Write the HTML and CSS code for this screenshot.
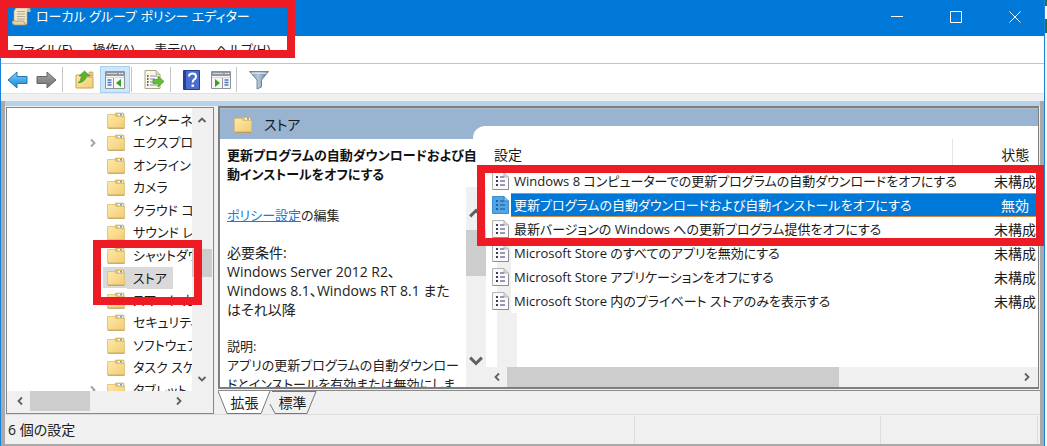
FILE: index.html
```html
<!DOCTYPE html>
<html lang="ja">
<head>
<meta charset="utf-8">
<title>ローカル グループ ポリシー エディター</title>
<link rel="stylesheet" href="styles.css">
</head>
<body>
<svg class="defs" aria-hidden="true">
  <defs>
    <linearGradient id="gold" x1="0" y1="0" x2="1" y2="1"><stop offset="0" stop-color="#ffe9a8"/><stop offset="1" stop-color="#f0cd74"/></linearGradient>
    <linearGradient id="sky" x1="0" y1="0" x2="0" y2="1"><stop offset="0" stop-color="#7fd0f8"/><stop offset="1" stop-color="#0f86d2"/></linearGradient>
    <linearGradient id="grey" x1="0" y1="0" x2="0" y2="1"><stop offset="0" stop-color="#a8a8a8"/><stop offset="1" stop-color="#6e6e6e"/></linearGradient>
    <linearGradient id="steel" x1="0" y1="0" x2="1" y2="0"><stop offset="0" stop-color="#6d8da6"/><stop offset=".45" stop-color="#b5cbdc"/><stop offset="1" stop-color="#577189"/></linearGradient>
    <symbol id="folder" viewBox="0 0 18 17">
      <path d="M8 3V2q0-1 1-1h7q1 0 1 1v3H8z" fill="#e5c36d" stroke="#c9a55a" stroke-width=".6"/>
      <path d="M11 2h5v1.500h-5z" fill="#fff"/><path d="M13 2h2v1.500h-2z" fill="#5aa2dc"/>
      <path d="M.5 2.500h7L9 4.500h8.500V16H.5z" fill="url(#gold)" stroke="#dcbb70" stroke-width=".8"/>
      <path d="M1 16.300h16.500" stroke="#b58f45" stroke-width=".8"/>
    </symbol>
    <symbol id="policy" viewBox="0 0 17 18">
      <path d="M.5.5H12L16.500 5v12.500H.5z" fill="#fafafa" stroke="#b4b4b4"/>
      <path d="M12 .5V5h4.500" fill="#d8d8d8" stroke="#b4b4b4"/>
      <path d="M1 17.500h15.500V6" fill="none" stroke="#8f8f8f"/>
      <path d="M4 4h2v2H4zM4 8h2v2H4zM4 12h2v2H4z" fill="#3c3c4a"/>
      <path d="M8 5h4M8 9h5M8 13h5" stroke="#7a76a6" stroke-width="1.400"/>
    </symbol>
    <symbol id="policy-on" viewBox="0 0 17 18">
      <path d="M.5.5H12L16.500 5v12.500H.5z" fill="#52a5e2" stroke="#3b8fd0"/>
      <path d="M12 .5V5h4.500" fill="#8dc5ee" stroke="#2f7fbe"/>
      <path d="M4 4h2v2H4zM4 8h2v2H4zM4 12h2v2H4z" fill="#1d639f"/>
      <path d="M8 5h4M8 9h5M8 13h5" stroke="#2470b4" stroke-width="1.400"/>
    </symbol>
    <symbol id="left" viewBox="0 0 12 12"><path d="M8 2.500L4.500 6 8 9.500" fill="none" stroke="currentColor" stroke-width="1.800"/></symbol>
    <symbol id="right" viewBox="0 0 12 12"><path d="M4 2.500L7.500 6 4 9.500" fill="none" stroke="currentColor" stroke-width="1.800"/></symbol>
    <symbol id="up" viewBox="0 0 12 12"><path d="M2.500 8L6 4.500 9.500 8" fill="none" stroke="currentColor" stroke-width="1.800"/></symbol>
    <symbol id="down" viewBox="0 0 12 12"><path d="M2.500 4L6 7.500 9.500 4" fill="none" stroke="currentColor" stroke-width="1.800"/></symbol>
  </defs>
</svg>
<div class="desktop">
  <div class="window">
    <header class="titlebar">
      <svg class="app-icon" viewBox="0 0 20 20" aria-hidden="true">
        <path d="M5 2h13q-2 1-2 4v12H3V5z" fill="#f1e6cc" stroke="#b8a57e" stroke-width=".7"/>
        <path d="M16 6q0-4 2-4t1.500 4z" fill="#cbb78c"/>
        <path d="M6 5.500h8M6 8h8M6 10.500h8M6 13h8" stroke="#a79b82" stroke-width=".8"/>
        <path d="M1 15h12q0 4 3 4H4q-3 0-3-4z" fill="#e3d3ab" stroke="#a8946a" stroke-width=".7"/>
      </svg>
      <h1 class="title">ローカル グループ ポリシー エディター</h1>
      <button class="caption" aria-label="最小化"><svg viewBox="0 0 12 12"><path d="M0 5.500h12"/></svg></button>
      <button class="caption" aria-label="最大化"><svg viewBox="0 0 12 12"><path d="M.5.5h11v11H.5z"/></svg></button>
      <button class="caption" aria-label="閉じる"><svg viewBox="0 0 12 12"><path d="M.5.5l11 11M11.500.5l-11 11"/></svg></button>
    </header>
    <nav class="menubar">
      <button>ファイル(F)</button><button>操作(A)</button><button>表示(V)</button><button>ヘルプ(H)</button>
    </nav>
    <div class="toolbar">
      <button aria-label="戻る"><svg width="21" height="18" viewBox="0 0 21 18"><path d="M1 9L10 1v4.500h10v7H10V17z" fill="url(#sky)" stroke="#2276b8"/></svg></button>
      <button aria-label="進む"><svg width="21" height="18" viewBox="0 0 21 18"><path d="M20 9L11 1v4.500H1v7h10V17z" fill="url(#grey)" stroke="#666"/></svg></button>
      <span class="sep"></span>
      <button aria-label="上へ"><svg width="20" height="19" viewBox="0 0 20 19"><path d="M1 5h7l2 2h8v11H1z" fill="url(#gold)" stroke="#caa453"/><path d="M14 2h4v4h-4z" fill="#e8c873" stroke="#caa453" stroke-width=".7"/><path d="M3 13q3-2 3.500-7H4l5.500-5L15 6h-3.500q-1 6-8.500 7z" fill="#59b52c" stroke="#3a8a1b" stroke-width=".6"/></svg></button>
      <button class="pressed" aria-label="コンソール ツリーの表示"><svg width="20" height="18" viewBox="0 0 20 18"><path d="M.5.500h19v17H.5z" fill="#f6f6f6" stroke="#8e9299"/><path d="M1 1h18v4H1z" fill="#8f98a5"/><path d="M2 2.500h10" stroke="#c8d0da"/><path d="M14 2.500h1.500M16.500 2.500H18" stroke="#fff"/><path d="M1 6.500h18" stroke="#d4d8dd"/><path d="M8.500 7v10" stroke="#999"/><path d="M2.500 9h4M2.500 11.500h4M2.500 14h4" stroke="#4e77b5" stroke-width="1.400"/><path d="M16 8v8l-5-4z" fill="#3d9e27"/></svg></button>
      <span class="sep"></span>
      <button aria-label="一覧のエクスポート"><svg width="21" height="19" viewBox="0 0 21 19"><path d="M1 .5h11l4 4v14H1z" fill="#fbf8e6" stroke="#a8a48e"/><path d="M12 .5v4h4" fill="#ddd8bb" stroke="#a8a48e" stroke-width=".7"/><path d="M3 6h1.500M3 9h1.500M3 12h1.500M3 15h1.500" stroke="#333" stroke-width="1.400"/><path d="M6 6h7M6 9h5M6 12h5M6 15h7" stroke="#8b86b4"/><path d="M9 9.500h5V6l6 5.500-6 5.500v-3.500H9z" fill="#62c038" stroke="#3f9420" stroke-width=".7"/></svg></button>
      <span class="sep"></span>
      <button aria-label="ヘルプ"><svg width="17" height="20" viewBox="0 0 17 20"><path d="M.5.5h16v19H.5z" fill="#4a6ed0" stroke="#233f91"/><path d="M1 1h2v18H1z" fill="#243f9c"/><path d="M6 6.500q0-3 3.500-3t3.500 3q0 2-2 3.200-1.300.8-1.300 2.800" fill="none" stroke="#fff" stroke-width="2"/><path d="M8.500 14.500h2.500v2.300H8.500z" fill="#fff"/></svg></button>
      <button class="action-pane" aria-label="操作ウィンドウの表示"><svg width="20" height="18" viewBox="0 0 20 18"><path d="M.5.500h19v17H.5z" fill="#f6f6f6" stroke="#8e9299"/><path d="M1 1h18v4H1z" fill="#8f98a5"/><path d="M2 2.500h10" stroke="#c8d0da"/><path d="M14 2.500h1.500M16.500 2.500H18" stroke="#fff"/><path d="M1 6.500h18" stroke="#d4d8dd"/><path d="M11.500 7v10" stroke="#999"/><path d="M13.500 9h4M13.500 11.500h4M13.500 14h4" stroke="#4e77b5" stroke-width="1.400"/><path d="M4 8v8l5-4z" fill="#3d9e27"/></svg></button>
      <span class="sep"></span>
      <button aria-label="フィルター"><svg width="20" height="20" viewBox="0 0 20 20"><path d="M.5 1.500h19L12.500 10v7L8 19V10z" fill="url(#steel)" stroke="#5c7488" stroke-width=".8"/><path d="M2 2.500h16l-1 1.500H3z" fill="#cfdeea"/></svg></button>
    </div>
    <div class="workspace">
      <section class="tree-pane">
        <ul class="tree">
          <li><svg class="folder"><use href="#folder"/></svg><span>インターネッ</span></li>
          <li><svg class="expander"><use href="#right"/></svg><svg class="folder"><use href="#folder"/></svg><span>エクスプロー</span></li>
          <li><svg class="folder"><use href="#folder"/></svg><span>オンライン</span></li>
          <li><svg class="folder"><use href="#folder"/></svg><span>カメラ</span></li>
          <li><svg class="folder"><use href="#folder"/></svg><span>クラウド コ</span></li>
          <li><svg class="folder"><use href="#folder"/></svg><span>サウンド レ</span></li>
          <li><svg class="folder"><use href="#folder"/></svg><span>シャットダウ</span></li>
          <li class="current"><svg class="folder"><use href="#folder"/></svg><span>ストア</span></li>
          <li><svg class="folder"><use href="#folder"/></svg><span>スマート カ</span></li>
          <li><svg class="folder"><use href="#folder"/></svg><span>セキュリティ</span></li>
          <li><svg class="folder"><use href="#folder"/></svg><span>ソフトウェア</span></li>
          <li><svg class="folder"><use href="#folder"/></svg><span>タスク スケ</span></li>
          <li><svg class="expander"><use href="#right"/></svg><svg class="folder"><use href="#folder"/></svg><span>タブレット</span></li>
        </ul>
        <div class="vbar">
          <button aria-label="上へスクロール"><svg><use href="#up"/></svg></button>
          <div class="track"><div class="thumb tree-thumb"></div></div>
          <button aria-label="下へスクロール"><svg><use href="#down"/></svg></button>
        </div>
        <div class="hbar">
          <button aria-label="左へスクロール"><svg><use href="#left"/></svg></button>
          <div class="track"><div class="thumb half"></div></div>
          <button aria-label="右へスクロール"><svg><use href="#right"/></svg></button>
        </div>
      </section>
      <section class="result">
        <div class="detail">
          <header class="detail-head"><svg class="folder"><use href="#folder"/></svg><h2>ストア</h2></header>
          <div class="detail-body">
            <article class="description">
              <h3>更新プログラムの自動ダウンロードおよび自<br>動インストールをオフにする</h3>
              <p><a href="#edit">ポリシー設定</a>の編集</p>
              <p class="requirements">必要条件:<br>Windows Server 2012 R2、<br>Windows 8.1、Windows RT 8.1 また<br>はそれ以降</p>
              <p>説明:<br>アプリの更新プログラムの自動ダウンロー<br>ドとインストールを有効または無効にしま</p>
            </article>
            <div class="vbar desc-bar">
              <button aria-label="上へスクロール"><svg><use href="#up"/></svg></button>
              <div class="track"><div class="thumb desc-thumb"></div></div>
              <button aria-label="下へスクロール"><svg><use href="#down"/></svg></button>
            </div>
            <div class="list">
              <div class="list-view">
                <table>
                  <thead><tr><th class="ico"></th><th class="name">設定</th><th class="state">状態</th></tr></thead>
                  <tbody>
                    <tr><td class="ico"><svg><use href="#policy"/></svg></td><td class="name">Windows 8 コンピューターでの更新プログラムの自動ダウンロードをオフにする</td><td class="state">未構成</td></tr>
                    <tr class="selected"><td class="ico"><svg><use href="#policy-on"/></svg></td><td class="name">更新プログラムの自動ダウンロードおよび自動インストールをオフにする</td><td class="state">無効</td></tr>
                    <tr><td class="ico"><svg><use href="#policy"/></svg></td><td class="name">最新バージョンの Windows への更新プログラム提供をオフにする</td><td class="state">未構成</td></tr>
                    <tr><td class="ico"><svg><use href="#policy"/></svg></td><td class="name">Microsoft Store のすべてのアプリを無効にする</td><td class="state">未構成</td></tr>
                    <tr><td class="ico"><svg><use href="#policy"/></svg></td><td class="name">Microsoft Store アプリケーションをオフにする</td><td class="state">未構成</td></tr>
                    <tr><td class="ico"><svg><use href="#policy"/></svg></td><td class="name">Microsoft Store 内のプライベート ストアのみを表示する</td><td class="state">未構成</td></tr>
                  </tbody>
                </table>
              </div>
              <div class="hbar">
                <button aria-label="左へスクロール"><svg><use href="#left"/></svg></button>
                <div class="track"><div class="thumb wide"></div></div>
                <button aria-label="右へスクロール"><svg><use href="#right"/></svg></button>
              </div>
            </div>
          </div>
        </div>
        <div class="tabs">
          <button class="tab"><svg viewBox="0 0 54 24" aria-hidden="true"><path d="M0 0l9 22.500h34L52 0" fill="#fff" stroke="#777"/></svg><span>拡張</span></button>
          <button class="tab second"><svg viewBox="0 0 54 24" aria-hidden="true"><path d="M6 .5h44L41 22.500H9L4 13" fill="#f0f0f0" stroke="#777"/></svg><span>標準</span></button>
        </div>
      </section>
    </div>
    <footer class="statusbar"><span class="count">6 個の設定</span><span class="cell"></span><span class="cell"></span></footer>
  </div>
  <div class="behind"></div>
  <div class="mark mark-title"></div>
  <div class="mark mark-tree"></div>
  <div class="mark mark-list"></div>
</div>
</body>
</html>
```
FILE: styles.css
```css
* { box-sizing: border-box; }
body {
  margin: 0;
  font: 14px/19px "Open Sans", "Noto Sans CJK JP", sans-serif;
  font-feature-settings: "palt";
  color: #1a1a1a;
}
button { font: inherit; font-feature-settings: inherit; color: inherit; border: 0; padding: 0; background: none; }
h1, h2, h3, p, ul { margin: 0; padding: 0; font-size: inherit; font-weight: normal; }
svg { display: block; flex: none; }
.defs { position: absolute; width: 0; height: 0; }
.desktop { position: relative; display: flex; height: 100vh; overflow: hidden; }
.window {
  flex: 1; min-width: 0; display: flex; flex-direction: column;
  border: solid #1a82d8; border-width: 0 1px; background: #f0f0f0;
}
.behind {
  width: 2px;
  background: linear-gradient(#217346 0 6px, #fff 6px 19px, #217346 19px 33px, #f2f2f2 33px 100px, #fff 100px);
}

.titlebar { display: flex; height: 36px; flex: none; background: #0078d7; color: #fff; }
.app-icon { width: 20px; height: 20px; margin: 6px 5px 0 10px; }
.title { flex: 1; font-size: 13px; line-height: 33px; white-space: nowrap; }
.caption { width: 59px; height: 34px; display: flex; justify-content: center; align-items: center; }
.caption svg { width: 12px; height: 12px; fill: none; stroke: #fff; }
.menubar { display: flex; gap: 20px; height: 28px; flex: none; padding: 0 12px; background: #fff; border-bottom: 1px solid #c2c2c8; font-size: 13px; white-space: nowrap; }
.toolbar { display: flex; align-items: center; gap: 8px; height: 30px; flex: none; padding: 2px 6px 0; background: #fff; border-bottom: 1px solid #e3e3e3; }
.pressed { display: flex; align-items: center; height: 27px; padding: 4px; margin: 0 -4px 0 -3px; background: #cde6f9; border: 1px solid #a5d1f3; }
.sep { width: 1px; height: 25px; margin-left: -3px; background: #c4c4c4; }
.sep + button { margin-left: 4px; }
.action-pane { margin-left: 3px; }

.workspace {
  flex: 1; min-height: 0; display: grid; grid-template: minmax(0, 1fr) / 209px minmax(0, 1fr); column-gap: 4px;
  margin-top: 7px; padding-top: 5px; border: solid #a9a9a9; border-width: 0 4px;
  background: linear-gradient(#b8d1ea 0 5px, #f0f0f0 5px);
}
.tree-pane {
  display: grid; grid-template: minmax(0, 1fr) 22px / minmax(0, 1fr) 20px;
  margin: 1px 0 0 1px; padding-right: 1px; border: 1px solid #828790; background: #f0f0f0;
}
.tree { list-style: none; overflow: hidden; background: #fff; padding-top: 1px; display: grid; grid-auto-rows: 22px 23px; align-content: start; font-size: 13px; white-space: nowrap; }
.tree li { display: flex; align-items: center; padding-left: 98px; }
.folder { width: 18px; height: 17px; margin: 0 2px; }
.tree .expander { width: 12px; height: 12px; margin: 0 6px 0 -18px; color: #a0a0a0; }
.tree span { padding: 0 6px; }
.current .folder { box-shadow: -2px 0 0 2px #d9d9d9, 2px 0 0 2px #d9d9d9; background: #d9d9d9; }
.current span { background: #d9d9d9; line-height: 22px; }
.vbar, .hbar { display: flex; background: #f0f0f0; color: #606060; }
.vbar { flex-direction: column; }
.vbar button, .hbar button { width: 20px; height: 20px; display: grid; place-items: center; }
.vbar svg, .hbar svg { width: 12px; height: 12px; }
.track { flex: 1; min-width: 0; min-height: 0; }
.thumb { background: #cdcdcd; }
.tree-pane .vbar { padding: 2px 0; }
.tree-pane .hbar { padding: 0 3px; }
.tree-thumb { height: 28px; margin-top: 119px; }
.hbar .thumb { height: 20px; }
.hbar .half { width: 43%; }
.hbar .wide { width: 65%; }

.result { display: flex; flex-direction: column; min-height: 0; }
.detail { flex: 1; min-height: 0; display: flex; flex-direction: column; border: 2px solid #7e7e7e; border-right-width: 1px; margin-right: 1px; background: #fff; }
.detail-head { position: relative; display: flex; align-items: center; gap: 10px; height: 31px; flex: none; padding: 0 12px; background: #99b4d1; border-top: 1px solid #b0bfd0; }
.detail-head::after { content: ""; position: absolute; left: 253px; right: 0; bottom: 0; height: 13px; border-top-left-radius: 12px; background: #fff; }
.detail-body { flex: 1; min-height: 0; display: grid; grid-template: minmax(0, 1fr) / 246px 20px minmax(0, 1fr); }
.description { padding: 7px 0 0 7px; font-size: 13px; white-space: nowrap; min-height: 0; overflow-y: clip; color: #222; }
.description h3 { font-weight: bold; margin-bottom: 22px; color: #111; }
.description p { margin-bottom: 18px; }
.description .requirements { font-size: 14px; }
a { color: #1a7ad4; }
.desc-bar { margin-top: 48px; padding: 16px 0; }
.desc-bar svg { width: 20px; height: 20px; }
.desc-thumb { height: 46px; margin-top: 7px; }
.list { display: flex; flex-direction: column; min-height: 0; min-width: 0; }
.list .hbar { padding: 0 1px; }
.list-view { flex: 1; min-height: 0; overflow: hidden; background: linear-gradient(#f0f0f0, #f0f0f0) 11px 106px / 20px 100% no-repeat #fff; }
table { width: 100%; border-collapse: collapse; table-layout: fixed; white-space: nowrap; background: linear-gradient(#fff, #fff) 25px 0 / 100% 100% no-repeat; }
th, td { padding: 0; font-weight: normal; text-align: left; height: 24px; }
th { height: 30px; }
th.name { text-indent: -20px; }
td.name { font-size: 13px; }
th.ico, td.ico { width: 25px; padding-left: 6px; }
.ico svg { width: 17px; height: 18px; }
th.name, td.name { padding-left: 3px; }
th.state, td.state { width: 86px; padding-left: 40px; text-align: center; }
th.state { border-left: 1px solid #e5e5e5; }
.selected .name, .selected .state { background: #0078d7; color: #fff; box-shadow: inset 0 1px #d08a4a, inset 0 -1px #d08a4a; }

.tabs { display: flex; height: 24px; flex: none; border-top: 1px solid #8a8a8a; margin-top: 1px; }
.tab { position: relative; display: grid; place-items: center; width: 53px; height: 23px; }
.tab svg { position: absolute; inset: 0; width: 54px; height: 24px; }
.tab span { position: relative; }
.second { margin-left: -5px; }
.statusbar { display: flex; height: 32px; flex: none; border: solid #a9a9a9; border-width: 0 4px 2px; padding: 2px 2px 0 3px; box-shadow: inset 0 1px #dcdcdc; line-height: 28px; }
.count { flex: 1; }
.cell { width: 246px; border-left: 1px solid #dcdcdc; }
.cell + .cell { width: 158px; border-right: 1px solid #dcdcdc; }

.mark { position: absolute; border: 8px solid #ed1c24; }
.mark-title { left: 0; top: 0; width: 295px; height: 58px; }
.mark-tree { left: 93px; top: 240px; width: 109px; height: 65px; }
.mark-list { left: 477px; top: 165px; right: 3px; height: 81px; }
```
